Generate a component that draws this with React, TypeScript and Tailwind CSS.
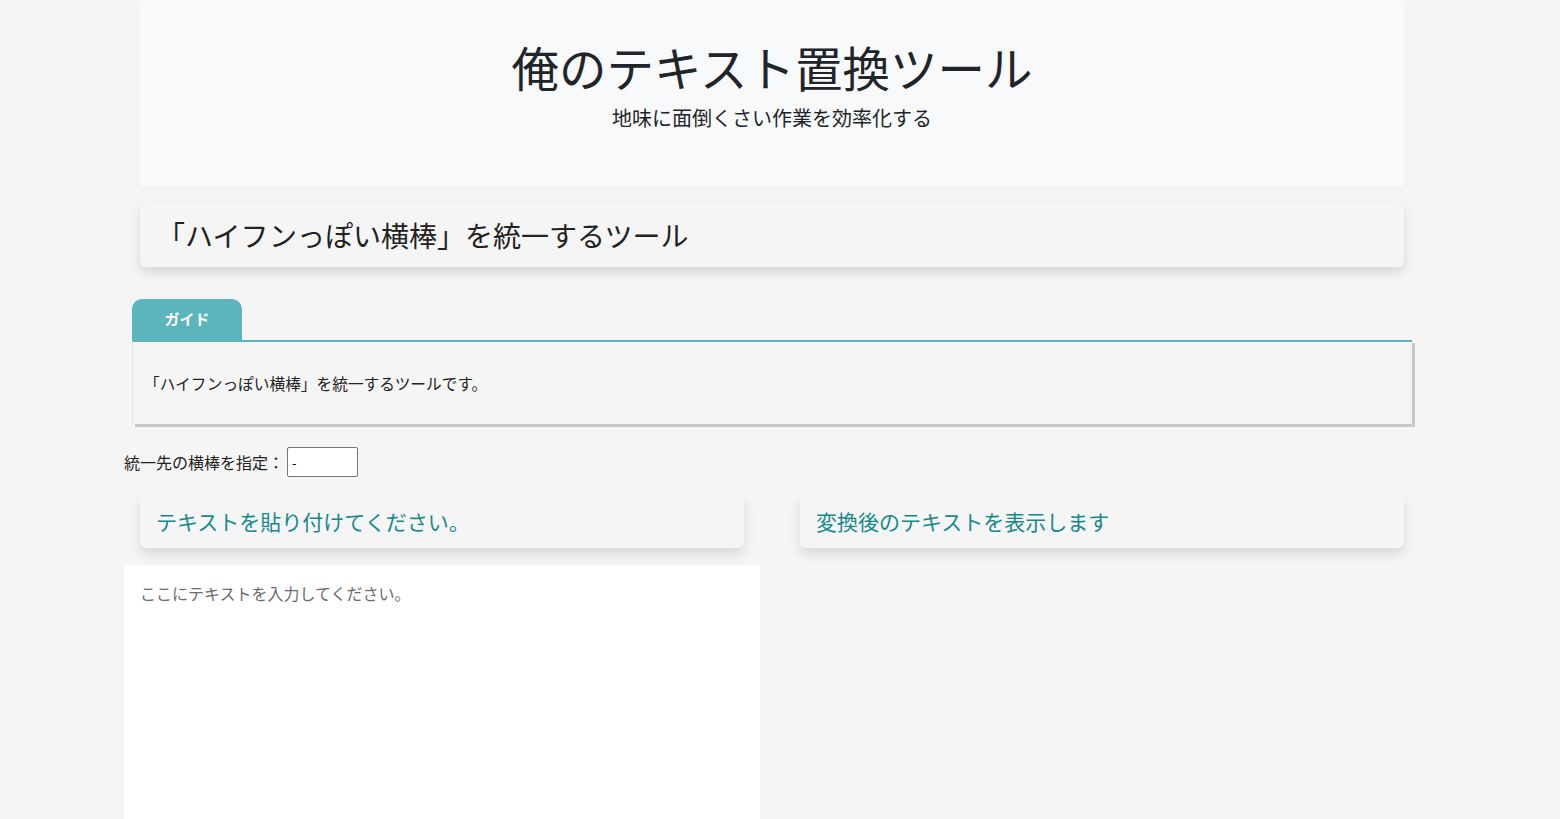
import React, { useState } from "react";

const FONT = { fontFamily: '"Noto Sans CJK JP", "Noto Sans", sans-serif' };

function SectionCard({ children, className = "" }: { children: React.ReactNode; className?: string }) {
  return (
    <div
      className={`mx-4 rounded-md bg-[#f5f5f5] shadow-[0_6px_12px_rgba(0,0,0,0.12)] ${className}`}
    >
      {children}
    </div>
  );
}

export default function App() {
  const [target, setTarget] = useState("-");
  const [input, setInput] = useState("");

  return (
    <div className="min-h-[819px] bg-[#f5f5f5] text-[#212529]" style={FONT}>
      <div className="mx-auto w-[1296px] -translate-x-2">
        <header className="mx-4 flex h-[187px] flex-col items-center bg-[#f8f9fa] pt-[35px] shadow-[0_2px_6px_rgba(0,0,0,0.03)]">
          <h1 className="text-[47.5px] leading-[64px]">俺のテキスト置換ツール</h1>
          <p className="mt-[4px] text-[20px] leading-[30px]">地味に面倒くさい作業を効率化する</p>
        </header>

        <SectionCard className="mt-4 flex h-16 items-center px-[17px]">
          <h2 className="text-[28px] leading-[40px] text-[#222]">「ハイフンっぽい横棒」を統一するツール</h2>
        </SectionCard>

        <div className="mx-2 mt-8">
          <div className="flex h-[41px] w-[110px] items-center justify-center rounded-t-[10px] bg-[#5bb5bd] text-[15px] font-bold text-white">
            ガイド
          </div>
          <div className="flex h-[84px] items-center border-t-2 border-l border-t-[#5fb0b8] border-l-[#e2e2e2] bg-[#f5f5f5] px-[11px] pt-[1px] shadow-[3px_3px_0_#c8c8c8]">
            <p className="text-[15.7px] leading-[24px] text-[#222]">「ハイフンっぽい横棒」を統一するツールです。</p>
          </div>
        </div>

        <div className="mt-[23px] flex items-center">
          <label className="text-[16px] leading-[24px] text-[#222]">統一先の横棒を指定：</label>
          <input
            value={target}
            onChange={(e) => setTarget(e.target.value)}
            className="ml-[3px] h-[30px] w-[71px] rounded-[2px] border border-[#767676] bg-white px-[4px] text-[13px] text-black outline-none"
            style={FONT}
          />
        </div>

        <div className="mt-[17px] grid grid-cols-2 gap-6">
          <div>
            <SectionCard className="flex h-[54px] items-center px-[16px]">
              <h3 className="text-[21px] leading-[28px] text-[#16898b]">テキストを貼り付けてください。</h3>
            </SectionCard>
            <textarea
              value={input}
              onChange={(e) => setInput(e.target.value)}
              placeholder="ここにテキストを入力してください。"
              className="mt-[17px] block h-[300px] w-full resize-none bg-white px-[16px] py-[16px] text-[16px] leading-[24px] text-[#222] outline-none placeholder:text-[#6b6b6b]"
              style={FONT}
            />
          </div>
          <div>
            <SectionCard className="flex h-[54px] items-center px-[16px]">
              <h3 className="text-[21px] leading-[28px] text-[#16898b]">変換後のテキストを表示します</h3>
            </SectionCard>
            <div className="mt-[17px] min-h-[240px] whitespace-pre-wrap px-4 text-[16px]">
              {input.split("").map((ch) => (/[-‐‑‒–—―−ー－─━]/.test(ch) ? target : ch)).join("")}
            </div>
          </div>
        </div>
      </div>
    </div>
  );
}
